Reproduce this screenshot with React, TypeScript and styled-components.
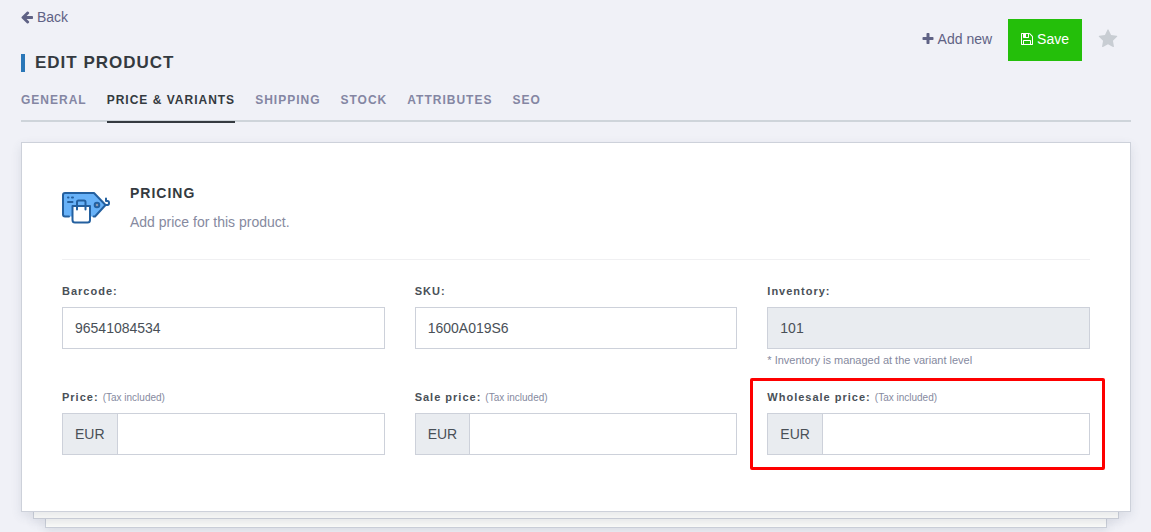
import React from "react";
import styled, { createGlobalStyle, css } from "styled-components";

const GlobalStyle = createGlobalStyle`
  *, *::before, *::after { box-sizing: border-box; }
  body {
    margin: 0;
    background: #f0f1f7;
    color: #495057;
    font-family: "Liberation Sans", Arial, sans-serif;
    font-size: 14px;
    line-height: 20px;
  }
`;

const Page = styled.main`
  padding: 0 20px 4px 21px;
`;

const Header = styled.header`
  display: flex;
  justify-content: space-between;
  align-items: flex-start;
`;

const Heading = styled.div`
  padding-top: 7px;
`;

const IconLink = styled.a`
  display: flex;
  align-items: center;
  gap: 4px;
  color: #5f6285;
  text-decoration: none;
`;

const Title = styled.h1`
  margin: 27px 0 0;
  padding-left: 10px;
  border-left: 4px solid #2a77b8;
  color: #343a40;
  font-size: 17px;
  line-height: 18px;
  letter-spacing: 1px;
  text-transform: uppercase;
`;

const Actions = styled.div`
  display: flex;
  align-items: flex-start;
  gap: 16px;
  padding: 19px 13px 0 0;
  line-height: 40px;
`;

const SaveButton = styled.button`
  display: inline-flex;
  align-items: center;
  gap: 4px;
  height: 42px;
  padding: 0 12px 2px;
  border: 1px solid #24bf0a;
  background: #24bf0a;
  color: #fff;
  font: inherit;
`;

const StarButton = styled.button`
  display: inline-flex;
  align-items: center;
  height: 40px;
  padding: 0;
  border: 0;
  background: none;
  color: #c8cdd3;
`;

const Tabs = styled.nav`
  display: flex;
  gap: 20px;
  height: 32px;
  margin: 18px 0 20px;
  border-bottom: 2px solid #ced4da;
`;

const Tab = styled.a<{ $active?: boolean }>`
  height: 33px;
  border-bottom: 2px solid ${(p) => (p.$active ? "#343a40" : "transparent")};
  color: ${(p) => (p.$active ? "#343a40" : "#8486a3")};
  font-size: 12px;
  font-weight: 700;
  letter-spacing: 1px;
  text-decoration: none;
  text-transform: uppercase;
`;

const Card = styled.section`
  position: relative;
  z-index: 2;
  padding: 40px 40px 56px;
  border: 1px solid #cdd1da;
  background: #fff;
  box-shadow: 0 4px 10px rgba(60, 70, 100, 0.12);
`;

const Sheet = styled.div<{ $depth: number }>`
  position: relative;
  z-index: ${(p) => 2 - p.$depth};
  height: ${(p) => (p.$depth === 1 ? 7 : 9)}px;
  margin: 0 ${(p) => p.$depth * 12}px;
  border: 1px solid #cdd1da;
  border-top: 0;
  background: #fdfdfb;
  box-shadow: 0 4px 10px rgba(60, 70, 100, 0.12);
`;

const SectionHead = styled.div`
  display: flex;
  align-items: center;
  gap: 18px;
  padding-bottom: 27px;
  border-bottom: 1px solid #f0f0f2;
`;

const SectionTitle = styled.h2`
  margin: 0 0 9px;
  color: #343a40;
  font-size: 14px;
  line-height: 20px;
  letter-spacing: 1px;
  text-transform: uppercase;
`;

const SectionText = styled.p`
  margin: 0;
  color: #868aa0;
`;

const Fields = styled.form`
  display: grid;
  grid-template-columns: repeat(3, minmax(0, 1fr));
  gap: 21px 30px;
  margin-top: 23px;
`;

const Field = styled.div<{ $highlight?: boolean }>`
  position: relative;
  ${(p) =>
    p.$highlight &&
    css`
      &::after {
        content: "";
        position: absolute;
        inset: -11px -15px -15px -17px;
        border: 3px solid #fe0000;
        border-radius: 2px;
        pointer-events: none;
      }
    `}
`;

const Label = styled.label`
  display: block;
  margin-bottom: 8px;
  font-size: 11px;
  font-weight: 700;
  line-height: 16px;
  letter-spacing: 1px;
`;

const TaxHint = styled.span`
  color: #868aa0;
  font-size: 10px;
  font-weight: 400;
  line-height: 10px;
  letter-spacing: 0;
`;

const Control = styled.div`
  display: flex;
  height: 42px;
  border: 1px solid #cdd1da;
`;

const Currency = styled.span`
  flex: none;
  padding: 10px 12px;
  border-right: 1px solid #cdd1da;
  background: #e9ecf0;
`;

const TextInput = styled.input`
  flex: 1;
  min-width: 0;
  padding: 0 12px;
  border: 0;
  border-radius: 0;
  outline: 0;
  background: #fff;
  color: #495057;
  font: inherit;
  &:read-only {
    background: #e9ecf0;
  }
`;

const Note = styled.small`
  display: block;
  margin-top: 3px;
  color: #868aa0;
  font-size: 11px;
  line-height: 16px;
`;

const Glyph = ({ d }: { d: string }) => (
  <svg width="12" height="14" viewBox="128 0 1536 1792" fill="currentColor" aria-hidden="true">
    <path d={d} />
  </svg>
);

const ARROW =
  "M1664 896v128q0 53-32.5 90.5t-84.5 37.5h-704l293 294q38 36 38 90t-38 90l-75 76q-37 37-90 37-52 0-91-37l-651-652q-37-37-37-90 0-52 37-91l651-650q38-38 91-38 52 0 90 38l75 74q38 38 38 91t-38 91l-293 293h704q52 0 84.5 37.5t32.5 90.5z";
const PLUS =
  "M1600 736v192q0 40-28 68t-68 28h-416v416q0 40-28 68t-68 28h-192q-40 0-68-28t-28-68v-416h-416q-40 0-68-28t-28-68v-192q0-40 28-68t68-28h416v-416q0-40 28-68t68-28h192q40 0 68 28t28 68v416h416q40 0 68 28t28 68z";
const FLOPPY =
  "M512 1536h768v-384h-768v384zm896 0h128v-896q0-14-10-38.5t-20-34.5l-281-281q-10-10-34-20t-39-10v416q0 40-28 68t-68 28h-576q-40 0-68-28t-28-68v-416h-128v1280h128v-416q0-40 28-68t68-28h832q40 0 68 28t28 68v416zm-384-928v-320q0-13-9.5-22.5t-22.5-9.5h-192q-13 0-22.5 9.5t-9.5 22.5v320q0 13 9.5 22.5t22.5 9.5h192q13 0 22.5-9.5t9.5-22.5zm640 32v928q0 40-28 68t-68 28h-1344q-40 0-68-28t-28-68v-1344q0-40 28-68t68-28h928q40 0 88 20t76 48l280 280q28 28 48 76t20 88z";
const STAR =
  "M1728 647q0 22-26 48l-363 354 86 500q1 7 1 20 0 21-10.5 35.5t-30.5 14.5q-19 0-40-12l-449-236-449 236q-22 12-40 12-21 0-31.5-14.5t-10.5-35.5q0-6 2-20l86-500-364-354q-25-27-25-48 0-37 56-46l502-73 225-455q19-41 49-41t49 41l225 455 502 73q56 9 56 46z";

const PriceTagIcon = () => (
  <svg
    width="50"
    height="33"
    viewBox="1 0 50 33"
    fill="none"
    stroke="#24609f"
    strokeWidth="2"
    strokeLinecap="round"
    strokeLinejoin="round"
    aria-hidden="true"
  >
    <path d="M4 2h29l11.5 12L34 25.5H4q-2 0-2-2V4q0-2 2-2z" fill="#68b2f8" stroke="none" />
    <path d="M8 25.5H4q-2 0-2-2V4q0-2 2-2h29l11.5 12L34 25.5h-1.5" />
    <circle cx="36" cy="14" r="2.3" fill="#8d9bb0" />
    <path d="M44.5 14h2q1.500 0 1.500-2t-1.500-2h-1.500V7.500" />
    <path d="M7 6.500h.5M11 6.500h1M7 11h4.500" />
    <path d="M11.500 15h17.500v14q0 2.500-2.500 2.500h-12.500q-2.500 0-2.500-2.500z" fill="#fff" />
    <path d="M16 18.500V11q0-1.500 1.500-1.500h5.500q1.500 0 1.500 1.500v7.500" />
  </svg>
);

const TABS = ["General", "Price & Variants", "Shipping", "Stock", "Attributes", "SEO"];

const PRICES = [
  { id: "price", label: "Price:" },
  { id: "sale-price", label: "Sale price:" },
  { id: "wholesale-price", label: "Wholesale price:", highlight: true },
];

export default function App() {
  return (
    <Page>
      <GlobalStyle />
      <Header>
        <Heading>
          <IconLink href="#back">
            <Glyph d={ARROW} />
            Back
          </IconLink>
          <Title>Edit product</Title>
        </Heading>
        <Actions>
          <IconLink href="#new">
            <Glyph d={PLUS} />
            Add new
          </IconLink>
          <SaveButton type="submit" form="pricing">
            <Glyph d={FLOPPY} />
            Save
          </SaveButton>
          <StarButton type="button" aria-label="Favourite">
            <svg width="20" height="20" viewBox="0 0 1792 1792" fill="currentColor" aria-hidden="true">
              <path d={STAR} />
            </svg>
          </StarButton>
        </Actions>
      </Header>

      <Tabs>
        {TABS.map((name) => {
          const active = name === "Price & Variants";
          return (
            <Tab key={name} href="#tab" $active={active} aria-current={active ? "page" : undefined}>
              {name}
            </Tab>
          );
        })}
      </Tabs>

      <Card>
        <SectionHead>
          <PriceTagIcon />
          <div>
            <SectionTitle>Pricing</SectionTitle>
            <SectionText>Add price for this product.</SectionText>
          </div>
        </SectionHead>
        <Fields id="pricing">
          <Field>
            <Label htmlFor="barcode">Barcode:</Label>
            <Control>
              <TextInput id="barcode" defaultValue="96541084534" />
            </Control>
          </Field>
          <Field>
            <Label htmlFor="sku">SKU:</Label>
            <Control>
              <TextInput id="sku" defaultValue="1600A019S6" />
            </Control>
          </Field>
          <Field>
            <Label htmlFor="inventory">Inventory:</Label>
            <Control>
              <TextInput id="inventory" defaultValue="101" readOnly />
            </Control>
            <Note>* Inventory is managed at the variant level</Note>
          </Field>
          {PRICES.map(({ id, label, highlight }) => (
            <Field key={id} $highlight={highlight}>
              <Label htmlFor={id}>
                {label} <TaxHint>(Tax included)</TaxHint>
              </Label>
              <Control>
                <Currency>EUR</Currency>
                <TextInput id={id} />
              </Control>
            </Field>
          ))}
        </Fields>
      </Card>
      <Sheet $depth={1} />
      <Sheet $depth={2} />
    </Page>
  );
}
